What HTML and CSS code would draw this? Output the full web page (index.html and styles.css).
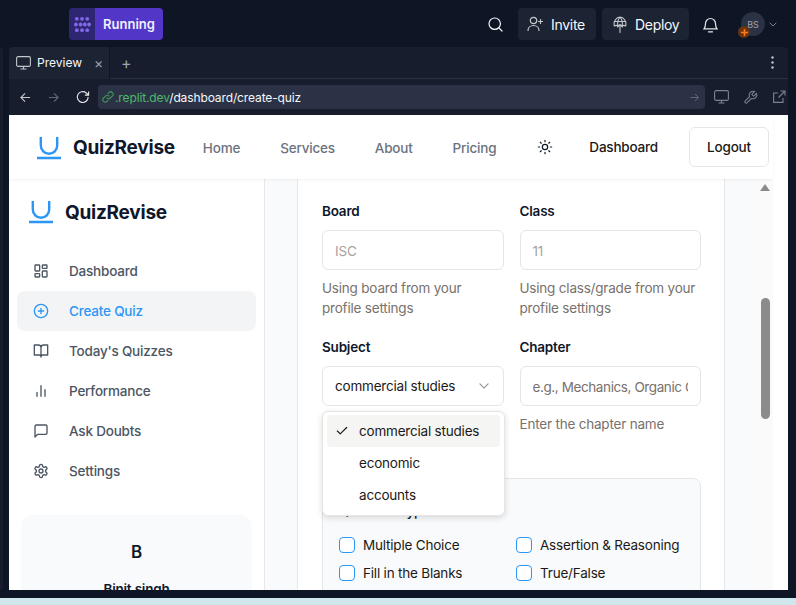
FILE: index.html
```html
<!DOCTYPE html>
<html>
<head>
  <title>QuizRevise</title>
  <meta charset="UTF-8">
  <link rel="stylesheet" href="styles.css">
</head>
<body>

  <!-- top bar of the workspace -->
  <div class="topbar">
    <div class="run-group">
      <span class="run-icon">
        <svg viewBox="0 0 18 18" fill="#8068e8">
          <circle cx="3" cy="3" r="2"/><circle cx="8.500" cy="3" r="2"/><circle cx="14" cy="3" r="2"/>
          <circle cx="2" cy="9" r="2"/><circle cx="7" cy="9" r="2"/><circle cx="11.500" cy="9" r="2"/><circle cx="16" cy="9" r="2"/>
          <circle cx="3" cy="15" r="2"/><circle cx="8.500" cy="15" r="2"/><circle cx="14" cy="15" r="2"/>
        </svg>
      </span>
      <span class="run-label">Running</span>
    </div>
    <div class="top-actions">
      <svg class="search-icon" width="15" height="15" viewBox="0 0 15 15" fill="none" stroke="#f5f9fc" stroke-width="1.200" stroke-linecap="round"><circle cx="6.700" cy="6.700" r="5.700"/><path d="M10.900 10.900 14 14"/></svg>
      <button class="dark-btn invite-btn">
        <svg width="17" height="16" viewBox="0 0 17 16" fill="none" stroke="#c2c8cc" stroke-width="1.200" stroke-linecap="round"><circle cx="6.500" cy="4.500" r="3.200"/><path d="M1 14.500c0-3 2.400-5 5.500-5s5.500 2 5.500 5M13.500 3.500v4M11.500 5.500h4"/></svg>
        Invite
      </button>
      <button class="dark-btn deploy-btn">
        <svg width="14" height="17" viewBox="0 0 14 17" fill="none" stroke="#c2c8cc" stroke-width="1.100" stroke-linecap="round"><path d="M1.300 10c-1-4.500 2-9 5.700-9s6.700 4.500 5.700 9M1.300 10c1.400-.9 2.500-.9 3.700 0 1.100-.9 2.900-.9 4 0 1.200-.9 2.300-.9 3.700 0M5 10C4.200 7 4.500 4 7 1c2.500 3 2.800 6 2 9M1.200 5.500h11.600M7 16.500V8.500M4.500 11 7 8.500 9.500 11"/></svg>
        Deploy
      </button>
      <svg class="bell-icon" width="15" height="17" viewBox="0 0 15 17" fill="none" stroke="#e4e8ea" stroke-width="1.200" stroke-linecap="round"><path d="M1 12.800c1.200-1.200 1.500-2.500 1.500-5.300a5 5 0 0 1 10 0c0 2.800.3 4.100 1.500 5.300zM5.500 15.800h4"/></svg>
      <span class="avatar">BS
        <span class="avatar-badge">
          <svg width="7" height="7" viewBox="0 0 7 7" fill="none" stroke="#ff7a1a" stroke-width="1.600"><path d="M3.500 0v7M0 3.500h7"/></svg>
        </span>
      </span>
      <svg class="avatar-chevron" width="8" height="5" viewBox="0 0 8 5" fill="none" stroke="#7b8390" stroke-width="1"><path d="M.7.700 4 4l3.300-3.300"/></svg>
    </div>
  </div>

  <div class="workspace">
    <div class="side-sliver"></div>
    <div class="preview-pane">

      <div class="tab-row">
        <div class="tab">
          <svg width="15" height="14" viewBox="0 0 15 14" fill="none" stroke="#c2c8cc" stroke-width="1.100"><rect x=".6" y=".6" width="13.800" height="9.800" rx="1.500"/><path d="M7.500 10.500v2.500M4.500 13h6"/></svg>
          <span class="tab-title">Preview</span>
          <span class="tab-close">×</span>
        </div>
        <span class="tab-plus">+</span>
        <svg class="tab-menu" width="3" height="13" viewBox="0 0 3 13" fill="#c2c8cc"><circle cx="1.500" cy="1.500" r="1.200"/><circle cx="1.500" cy="6.500" r="1.200"/><circle cx="1.500" cy="11.500" r="1.200"/></svg>
      </div>

      <div class="url-row">
        <svg class="url-nav" width="11" height="11" viewBox="0 0 12 12" fill="none" stroke="#c2c8cc" stroke-width="1.200"><path d="M11 6H1M5.500 1.500 1 6l4.500 4.500"/></svg>
        <svg class="url-nav" width="11" height="11" viewBox="0 0 12 12" fill="none" stroke="#5f6775" stroke-width="1.200"><path d="M1 6h10M6.500 1.500 11 6l-4.500 4.500"/></svg>
        <svg class="url-nav reload" width="14" height="14" viewBox="0 0 15 15" fill="none" stroke="#e4e8ea" stroke-width="1.200"><path d="M13 7.500A5.800 5.800 0 1 1 11 3.200L13.500 5.500M13.500 1.500v4h-4"/></svg>
        <div class="url-box">
          <svg width="12" height="12" viewBox="0 0 12 12" fill="none" stroke="#3f8f56" stroke-width="1.200" stroke-linecap="round"><path d="M5 7a2.300 2.300 0 0 0 3.400 0l2-2A2.400 2.400 0 0 0 7 1.600L6 2.600M7 5a2.300 2.300 0 0 0-3.400 0l-2 2A2.400 2.400 0 0 0 5 10.400l1-1"/></svg>
          <span class="url-text"><span class="url-host">.replit.dev</span>/dashboard/create-quiz</span>
          <svg class="url-go" width="9" height="9" viewBox="0 0 9 9" fill="none" stroke="#5f6775" stroke-width="1"><path d="M.5 4.500h8M5 1l3.500 3.500L5 8"/></svg>
        </div>
        <div class="url-tools">
          <svg width="15" height="14" viewBox="0 0 15 14" fill="none" stroke="#7b8390" stroke-width="1.100"><rect x=".6" y=".6" width="13.800" height="9.800" rx="1.500"/><path d="M7.500 10.500v2.500M4.500 13h6"/></svg>
          <svg width="15" height="15" viewBox="0 0 24 24" fill="none" stroke="#7b8390" stroke-width="1.700"><path d="M14.700 6.300a1 1 0 0 0 0 1.400l1.600 1.600a1 1 0 0 0 1.400 0l3.770-3.770a6 6 0 0 1-7.940 7.940l-6.910 6.910a2.120 2.120 0 0 1-3-3l6.910-6.910a6 6 0 0 1 7.940-7.940l-3.760 3.760z"/></svg>
          <svg width="14" height="14" viewBox="0 0 14 14" fill="none" stroke="#7b8390" stroke-width="1.100"><path d="M11 8v4.400H1.600V3H6M8.500 1H13v4.500M13 1 6.500 7.500"/></svg>
        </div>
      </div>

      <div class="frame">
        <div class="frame-inner">

          <header class="site-header">
            <div class="brand site-brand">
              <svg width="24" height="24" viewBox="0 0 24 24" fill="none" stroke="#2b96f5" stroke-width="2.400"><path d="M3.800 1v8.500a8.200 8.200 0 0 0 16.400 0V1M0 22h24"/></svg>
              <span>QuizRevise</span>
            </div>
            <nav class="site-nav">
              <a>Home</a>
              <a>Services</a>
              <a>About</a>
              <a>Pricing</a>
            </nav>
            <svg class="sun-icon" width="16" height="16" viewBox="0 0 24 24" fill="none" stroke="#111827" stroke-width="1.800" stroke-linecap="round"><circle cx="12" cy="12" r="4"/><path d="M12 2v2M12 20v2M4.930 4.930l1.410 1.410M17.660 17.660l1.410 1.410M2 12h2M20 12h2M6.340 17.660l-1.410 1.410M19.070 4.930l-1.410 1.410"/></svg>
            <a class="header-link">Dashboard</a>
            <button class="logout-btn">Logout</button>
          </header>

          <div class="app-body">
            <aside class="sidebar">
              <div class="brand side-brand">
                <svg width="24" height="24" viewBox="0 0 24 24" fill="none" stroke="#2b96f5" stroke-width="2.400"><path d="M3.800 1v8.500a8.200 8.200 0 0 0 16.400 0V1M0 22h24"/></svg>
                <span>QuizRevise</span>
              </div>
              <ul class="side-menu">
                <li>
                  <svg width="16" height="16" viewBox="0 0 24 24" fill="none" stroke="currentColor" stroke-width="2"><rect x="3" y="3" width="7" height="9" rx="1"/><rect x="14" y="3" width="7" height="5" rx="1"/><rect x="14" y="12" width="7" height="9" rx="1"/><rect x="3" y="16" width="7" height="5" rx="1"/></svg>
                  Dashboard
                </li>
                <li class="active">
                  <svg width="16" height="16" viewBox="0 0 24 24" fill="none" stroke="currentColor" stroke-width="2" stroke-linecap="round"><circle cx="12" cy="12" r="10"/><path d="M8 12h8M12 8v8"/></svg>
                  Create Quiz
                </li>
                <li>
                  <svg width="16" height="16" viewBox="0 0 24 24" fill="none" stroke="currentColor" stroke-width="2" stroke-linejoin="round"><path d="M2 3h6a4 4 0 0 1 4 4v14a3 3 0 0 0-3-3H2zM22 3h-6a4 4 0 0 0-4 4v14a3 3 0 0 1 3-3h7z"/></svg>
                  Today's Quizzes
                </li>
                <li>
                  <svg width="16" height="16" viewBox="0 0 24 24" fill="none" stroke="currentColor" stroke-width="2" stroke-linecap="round"><path d="M18 20V10M12 20V4M6 20v-6"/></svg>
                  Performance
                </li>
                <li>
                  <svg width="16" height="16" viewBox="0 0 24 24" fill="none" stroke="currentColor" stroke-width="2" stroke-linejoin="round"><path d="M21 15a2 2 0 0 1-2 2H7l-4 4V5a2 2 0 0 1 2-2h14a2 2 0 0 1 2 2z"/></svg>
                  Ask Doubts
                </li>
                <li>
                  <svg width="16" height="16" viewBox="0 0 24 24" fill="none" stroke="currentColor" stroke-width="2" stroke-linejoin="round"><path d="M12.220 2h-.440a2 2 0 0 0-2 2v.180a2 2 0 0 1-1 1.730l-.430.250a2 2 0 0 1-2 0l-.150-.080a2 2 0 0 0-2.730.730l-.220.380a2 2 0 0 0 .730 2.730l.150.100a2 2 0 0 1 1 1.720v.510a2 2 0 0 1-1 1.740l-.150.090a2 2 0 0 0-.730 2.730l.220.380a2 2 0 0 0 2.730.730l.150-.080a2 2 0 0 1 2 0l.430.250a2 2 0 0 1 1 1.730V20a2 2 0 0 0 2 2h.440a2 2 0 0 0 2-2v-.180a2 2 0 0 1 1-1.730l.430-.250a2 2 0 0 1 2 0l.150.080a2 2 0 0 0 2.730-.730l.220-.390a2 2 0 0 0-.730-2.730l-.150-.080a2 2 0 0 1-1-1.740v-.500a2 2 0 0 1 1-1.740l.150-.090a2 2 0 0 0 .730-2.730l-.220-.380a2 2 0 0 0-2.730-.730l-.150.080a2 2 0 0 1-2 0l-.430-.250a2 2 0 0 1-1-1.730V4a2 2 0 0 0-2-2z"/><circle cx="12" cy="12" r="3"/></svg>
                  Settings
                </li>
              </ul>
              <div class="profile-card">
                <div class="profile-letter">B</div>
                <div class="profile-name">Binit singh</div>
              </div>
            </aside>

            <main class="main-area">
              <div class="form-card">
                <div class="form-grid">
                  <div class="field">
                    <label>Board</label>
                    <div class="input-box muted">ISC</div>
                    <p class="help-text">Using board from your profile settings</p>
                  </div>
                  <div class="field">
                    <label>Class</label>
                    <div class="input-box muted">11</div>
                    <p class="help-text">Using class/grade from your profile settings</p>
                  </div>
                  <div class="field">
                    <label>Subject</label>
                    <div class="input-box select-box">
                      commercial studies
                      <svg width="14" height="14" viewBox="0 0 24 24" fill="none" stroke="#8a8f98" stroke-width="2" stroke-linecap="round"><path d="m5 8.500 7 7 7-7"/></svg>
                    </div>
                    <ul class="dropdown">
                      <li class="selected">
                        <svg width="14" height="14" viewBox="0 0 24 24" fill="none" stroke="#1c1917" stroke-width="2" stroke-linecap="round" stroke-linejoin="round"><path d="M20 6 9 17l-5-5"/></svg>
                        commercial studies
                      </li>
                      <li>economic</li>
                      <li>accounts</li>
                    </ul>
                  </div>
                  <div class="field">
                    <label>Chapter</label>
                    <div class="input-box placeholder"><span>e.g., Mechanics, Organic Chemistry</span></div>
                    <p class="help-text">Enter the chapter name</p>
                  </div>
                </div>

                <div class="types-card">
                  <div class="types-title">Question Types</div>
                  <div class="types-grid">
                    <div class="check-row"><span class="check-box"></span>Multiple Choice</div>
                    <div class="check-row"><span class="check-box"></span>Assertion &amp; Reasoning</div>
                    <div class="check-row"><span class="check-box"></span>Fill in the Blanks</div>
                    <div class="check-row"><span class="check-box"></span>True/False</div>
                  </div>
                </div>
              </div>
            </main>

            <div class="scrollbar">
              <span class="scroll-arrow"></span>
              <span class="scroll-thumb"></span>
            </div>
          </div>

        </div>
      </div>
    </div>
  </div>

  <div class="desktop-strip"></div>

</body>
</html>
```

FILE: styles.css
```css
* {
  box-sizing: border-box;
}

html, body {
  height: 605px;
  overflow: hidden;
}

body {
  margin: 0;
  background-color: #0e1525;
  font-family: "Inter", "Liberation Sans", sans-serif;
  font-size: 14px;
  color: #111827;
}

ul {
  margin: 0;
  padding: 0;
  list-style: none;
}

button {
  font-family: inherit;
}

/* Top bar */
.topbar {
  height: 47px;
  padding: 8px 0 7px 69px;
  display: flex;
  justify-content: space-between;
}

.run-group {
  display: flex;
  height: 32px;
}

.run-icon {
  width: 26px;
  display: flex;
  align-items: center;
  justify-content: center;
  background-color: #2e2672;
  border-radius: 4px 0 0 4px;
}

.run-icon svg {
  width: 17px;
  height: 17px;
}

.run-label {
  width: 68px;
  display: flex;
  align-items: center;
  justify-content: center;
  background-color: #5136c8;
  border-radius: 0 4px 4px 0;
  color: #f0f0ff;
  font-size: 13px;
  font-weight: 600;
}

.top-actions {
  display: flex;
  align-items: center;
  padding-right: 19px;
}

.search-icon {
  margin-right: 15px;
}

.dark-btn {
  height: 32px;
  display: flex;
  align-items: center;
  border: none;
  border-radius: 4px;
  background-color: #1c2333;
  color: #f5f9fc;
  font-size: 14px;
  letter-spacing: -0.3px;
}

.invite-btn {
  width: 78px;
  padding-left: 9px;
  gap: 7px;
  margin-right: 6px;
}

.deploy-btn {
  width: 87px;
  padding-left: 11px;
  gap: 8px;
  margin-right: 14px;
}

.bell-icon {
  margin-right: 23px;
}

.avatar {
  position: relative;
  width: 24px;
  height: 24px;
  display: flex;
  align-items: center;
  justify-content: center;
  border-radius: 50%;
  background-color: #2b3245;
  color: #9da3ae;
  font-size: 9px;
}

.avatar-badge {
  position: absolute;
  left: -3px;
  bottom: -2px;
  width: 12px;
  height: 12px;
  display: flex;
  align-items: center;
  justify-content: center;
  border-radius: 50%;
  background-color: #6b3410;
}

.avatar-chevron {
  margin-left: 4px;
}

/* Preview pane */
.workspace {
  display: flex;
  height: 543px;
}

.side-sliver {
  width: 3px;
  margin-right: 6px;
  background-color: #171d2d;
  border-radius: 0 4px 4px 0;
}

.preview-pane {
  width: 779px;
  display: flex;
  flex-direction: column;
  border-radius: 4px 4px 0 0;
  background-color: #171d2d;
}

.tab-row {
  height: 32px;
  display: flex;
  align-items: center;
  border-bottom: 1px solid #2b3245;
  padding-right: 14px;
}

.tab {
  width: 101px;
  height: 32px;
  display: flex;
  align-items: center;
  padding-left: 7px;
  border-right: 1px solid #0e1525;
  background-color: #1c2333;
  border-radius: 4px 0 0 0;
}

.tab-title {
  margin-left: 6px;
  color: #f5f9fc;
  font-size: 12px;
}

.tab-close {
  margin-left: 12px;
  color: #9da3ae;
  font-size: 14px;
}

.tab-plus {
  margin-left: 11px;
  color: #9da3ae;
  font-size: 16px;
}

.tab-menu {
  margin-left: auto;
}

.url-row {
  height: 36px;
  display: flex;
  align-items: center;
  padding: 0 0 0 11px;
}

.url-nav {
  flex: none;
  margin-right: 17px;
}

.url-nav.reload {
  margin-right: 8px;
}

.url-box {
  width: 607px;
  height: 24px;
  display: flex;
  align-items: center;
  gap: 1px;
  padding: 0 6px 0 4px;
  background-color: #2b3245;
  border-radius: 4px;
}

.url-text {
  color: #f5f9fc;
  font-size: 12px;
  letter-spacing: -0.12px;
}

.url-host {
  color: #4cb96b;
}

.url-go {
  margin-left: auto;
}

.url-tools {
  display: flex;
  align-items: center;
  gap: 14px;
  margin-left: 9px;
}

/* The page inside the preview */
.frame {
  height: 475px;
  padding-right: 15px;
  background-color: #fff;
  overflow: hidden;
  font-size: 13.5px;
  letter-spacing: -0.2px;
}

.frame-inner {
  height: 100%;
  display: flex;
  flex-direction: column;
}

.site-header {
  position: relative;
  z-index: 2;
  flex: none;
  height: 64px;
  display: flex;
  align-items: center;
  padding: 0 4px 0 28px;
  background-color: #fff;
  box-shadow: 0 1px 2px rgba(0, 0, 0, 0.06);
}

.brand {
  display: flex;
  align-items: center;
  gap: 12px;
  font-size: 19px;
  font-weight: 700;
  letter-spacing: -0.25px;
  color: #0f172a;
}

.site-brand {
  margin-top: 1px;
}

.site-nav {
  display: flex;
  gap: 40px;
  margin-left: 28px;
  margin-top: 1px;
}

.site-nav a {
  color: #6b7280;
  font-weight: 500;
}

.sun-icon {
  margin-left: 41px;
  flex: none;
}

.header-link {
  margin-left: 36px;
  font-weight: 500;
  color: #1c1917;
}

.logout-btn {
  width: 80px;
  height: 40px;
  margin-left: auto;
  border: 1px solid #e5e7eb;
  border-radius: 6px;
  background-color: #fff;
  color: #1c1917;
  font-size: 13.5px;
  font-weight: 500;
  letter-spacing: -0.2px;
}

.app-body {
  flex: 1;
  min-height: 0;
  display: flex;
}

/* Sidebar */
.sidebar {
  flex: none;
  width: 256px;
  padding: 21px 8px 0;
  border-right: 1px solid #e5e7eb;
  background-color: #fff;
}

.side-brand {
  height: 24px;
  padding-left: 12px;
  margin-bottom: 27px;
}

.side-menu li {
  height: 40px;
  display: flex;
  align-items: center;
  gap: 20px;
  padding-left: 16px;
  border-radius: 8px;
  color: #4b5563;
  font-weight: 500;
}

.side-menu li.active {
  background-color: #f3f4f6;
  color: #2b96f5;
}

.side-menu li svg {
  flex: none;
}

.profile-card {
  margin: 24px 4px 0;
  height: 140px;
  padding-top: 25px;
  text-align: center;
  background-color: #f9fafb;
  border-radius: 12px;
}

.profile-letter {
  font-size: 17px;
  font-weight: 600;
  line-height: 24px;
  color: #0f172a;
}

.profile-name {
  margin-top: 15px;
  font-weight: 600;
  line-height: 20px;
  color: #0f172a;
}

/* Main column */
.main-area {
  flex: 1;
  min-width: 0;
  padding: 0 32px;
  background-color: #f9fafb;
}

.form-card {
  height: 100%;
  padding: 22px 23px 0 24px;
  background-color: #fff;
  border-left: 1px solid #e5e7eb;
  border-right: 1px solid #e5e7eb;
}

.form-grid {
  display: grid;
  grid-template-columns: 1fr 1fr;
  column-gap: 16px;
  row-gap: 19px;
}

.field {
  position: relative;
  min-width: 0;
}

.field label {
  display: block;
  line-height: 20px;
  font-weight: 600;
  color: #0f172a;
  margin-bottom: 9px;
}

.input-box {
  height: 40px;
  display: flex;
  align-items: center;
  padding: 0 12px;
  border: 1px solid #e7e5e4;
  border-radius: 6px;
  background-color: #fff;
}

.muted {
  padding-top: 2px;
  color: #a8a29e;
}

.select-box {
  justify-content: space-between;
  color: #1c1917;
}

.placeholder {
  padding-top: 2px;
  overflow: hidden;
  white-space: nowrap;
  color: #78716c;
  letter-spacing: -0.4px;
}

.placeholder span {
  display: block;
  overflow: hidden;
}

.help-text {
  margin: 8px 0 0;
  line-height: 20px;
  color: #78716c;
}

/* Open select menu */
.dropdown {
  position: absolute;
  z-index: 3;
  top: 74px;
  left: 0;
  width: 183px;
  height: 105px;
  padding: 3px 4px;
  background-color: #fff;
  border: 1px solid #e7e5e4;
  border-radius: 6px;
  box-shadow: 0 2px 6px rgba(0, 0, 0, 0.14);
  color: #1c1917;
}

.dropdown li {
  position: relative;
  height: 32px;
  display: flex;
  align-items: center;
  padding-left: 32px;
  border-radius: 4px;
}

.dropdown li.selected {
  background-color: #f5f5f4;
}

.dropdown li svg {
  position: absolute;
  left: 8px;
  top: 9px;
}

/* Question types */
.types-card {
  height: 200px;
  margin-top: 44px;
  padding: 22px 16px 0;
  background-color: #f9fafb;
  border: 1px solid #e7e5e4;
  border-radius: 8px;
}

.types-title {
  line-height: 20px;
  font-weight: 500;
  color: #0f172a;
}

.types-grid {
  display: grid;
  grid-template-columns: 161px 1fr;
  column-gap: 16px;
  row-gap: 8px;
  margin-top: 14px;
}

.check-row {
  display: flex;
  align-items: center;
  gap: 8px;
  line-height: 20px;
  white-space: nowrap;
  color: #1c1917;
}

.check-box {
  flex: none;
  width: 16px;
  height: 16px;
  border: 1px solid #2b96f5;
  border-radius: 4px;
  background-color: #fff;
}

/* Scrollbar of the page */
.scrollbar {
  flex: none;
  width: 16px;
  display: flex;
  flex-direction: column;
  align-items: center;
  background-color: #fafafa;
}

.scroll-arrow {
  margin-top: 5px;
  border-left: 5px solid transparent;
  border-right: 5px solid transparent;
  border-bottom: 7px solid #8b8b8b;
}

.scroll-thumb {
  width: 9px;
  height: 121px;
  margin-top: 107px;
  background-color: #8b8b8b;
  border-radius: 5px;
}

.desktop-strip {
  height: 7px;
  margin-top: 8px;
  background-color: #cfe6ec;
}
```
